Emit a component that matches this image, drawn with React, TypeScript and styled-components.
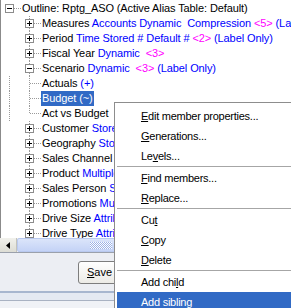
import styled, { createGlobalStyle } from "styled-components";

type Tone = "name" | "blue" | "pink";
type Seg = { text: string; tone?: Tone };
type TreeRow = {
  level: 0 | 1 | 2;
  box?: "plus" | "minus";
  last?: boolean;
  selected?: boolean;
  segs: Seg[];
};

const rows: TreeRow[] = [
  { level: 0, box: "minus", segs: [{ text: "Outline: Rptg_ASO (Active Alias Table: Default)" }] },
  {
    level: 1,
    box: "plus",
    segs: [
      { text: "Measures " },
      { text: "Accounts Dynamic  Compression ", tone: "blue" },
      { text: "<5>", tone: "pink" },
      { text: " (Label Only)", tone: "blue" },
    ],
  },
  {
    level: 1,
    box: "plus",
    segs: [
      { text: "Period " },
      { text: "Time Stored # Default # ", tone: "blue" },
      { text: "<2>", tone: "pink" },
      { text: " (Label Only)", tone: "blue" },
    ],
  },
  {
    level: 1,
    box: "plus",
    segs: [
      { text: "Fiscal Year " },
      { text: "Dynamic  ", tone: "blue" },
      { text: "<3>", tone: "pink" },
    ],
  },
  {
    level: 1,
    box: "minus",
    segs: [
      { text: "Scenario " },
      { text: "Dynamic  ", tone: "blue" },
      { text: "<3>", tone: "pink" },
      { text: " (Label Only)", tone: "blue" },
    ],
  },
  { level: 2, segs: [{ text: "Actuals " }, { text: "(+)", tone: "blue" }] },
  { level: 2, selected: true, segs: [{ text: "Budget (~)" }] },
  { level: 2, last: true, segs: [{ text: "Act vs Budget" }] },
  { level: 1, box: "plus", segs: [{ text: "Customer " }, { text: "Stored", tone: "blue" }] },
  { level: 1, box: "plus", segs: [{ text: "Geography " }, { text: "Stored", tone: "blue" }] },
  { level: 1, box: "plus", segs: [{ text: "Sales Channel " }, { text: "Stored", tone: "blue" }] },
  { level: 1, box: "plus", segs: [{ text: "Product " }, { text: "Multiple Hierarchies", tone: "blue" }] },
  { level: 1, box: "plus", segs: [{ text: "Sales Person " }, { text: "Stored", tone: "blue" }] },
  { level: 1, box: "plus", segs: [{ text: "Promotions " }, { text: "Multiple Hierarchies", tone: "blue" }] },
  { level: 1, box: "plus", segs: [{ text: "Drive Size " }, { text: "Attribute", tone: "blue" }] },
  { level: 1, box: "plus", segs: [{ text: "Drive Type " }, { text: "Attribute", tone: "blue" }] },
];

type MenuEntry = { label: string; key?: number; active?: boolean } | "sep";

const menu: MenuEntry[] = [
  { label: "Edit member properties...", key: 0 },
  { label: "Generations...", key: 0 },
  { label: "Levels...", key: 2 },
  "sep",
  { label: "Find members...", key: 0 },
  { label: "Replace...", key: 0 },
  "sep",
  { label: "Cut", key: 2 },
  { label: "Copy", key: 0 },
  { label: "Delete", key: 0 },
  "sep",
  { label: "Add child", key: 7 },
  { label: "Add sibling", active: true },
];

const GlobalStyle = createGlobalStyle`
  html, body {
    margin: 0;
    padding: 0;
  }
  body {
    width: 291px;
    height: 308px;
    overflow: hidden;
    background: #ffffff;
    font-family: "Liberation Sans", Arial, sans-serif;
    font-size: 11px;
  }
`;

function Expander({ kind }: { kind: "plus" | "minus" }) {
  return (
    <svg width="9" height="9" viewBox="0 0 9 9">
      <rect x="0.5" y="0.5" width="8" height="8" fill="#ffffff" stroke="#8c8c8c" />
      <path d="M2 4.5h5" stroke="#000000" />
      {kind === "plus" && <path d="M4.5 2v5" stroke="#000000" />}
    </svg>
  );
}

function Accel({ label, index }: { label: string; index?: number }) {
  if (index === undefined) return <>{label}</>;
  return (
    <>
      {label.slice(0, index)}
      <u>{label[index]}</u>
      {label.slice(index + 1)}
    </>
  );
}

export default function App() {
  return (
    <Screen>
      <GlobalStyle />
      <TreePane>
        {rows.map((r, i) => (
          <Row key={i}>
            {r.level === 2 && <Guide />}
            <NodeCell $level={r.level} $last={r.last}>
              {r.box && <Expander kind={r.box} />}
            </NodeCell>
            <Label $selected={r.selected}>
              {r.segs.map((s, j) => (
                <Seg key={j} $tone={r.selected ? "sel" : s.tone ?? "name"}>
                  {s.text}
                </Seg>
              ))}
            </Label>
          </Row>
        ))}
      </TreePane>

      <HScroll>
        <ArrowButton>
          <svg width="4" height="7" viewBox="0 0 4 7">
            <path d="M4 0v7L0 3.5z" fill="#000000" />
          </svg>
        </ArrowButton>
        <Thumb>
          <Grip />
        </Thumb>
        <Track />
      </HScroll>

      <ButtonBar>
        <PushButton type="button">
          <u>S</u>ave
        </PushButton>
      </ButtonBar>

      <StatusBand>
        <BandTop />
        <BandBottom />
      </StatusBand>

      <ContextMenu role="menu">
        {menu.map((m, i) =>
          m === "sep" ? (
            <Separator key={i} />
          ) : (
            <MenuItem key={i} role="menuitem" $active={m.active}>
              <Accel label={m.label} index={m.key} />
            </MenuItem>
          )
        )}
      </ContextMenu>
    </Screen>
  );
}

const dotV = "repeating-linear-gradient(to bottom, #9a9a9a 0 1px, transparent 1px 2px)";
const dotH = "repeating-linear-gradient(to right, #9a9a9a 0 1px, transparent 1px 2px)";

const Screen = styled.div`
  position: relative;
  width: 291px;
  height: 308px;
  display: flex;
  flex-direction: column;
  background: #eceef3;
`;

const TreePane = styled.div`
  height: 238px;
  flex: 0 0 238px;
  box-sizing: border-box;
  padding-top: 1px;
  border-left: 1px solid #8b8b8b;
  background: #ffffff;
  overflow: hidden;
`;

const Row = styled.div`
  display: flex;
  align-items: stretch;
  height: 15px;
  white-space: pre;
  letter-spacing: -0.1px;
`;

const Guide = styled.div`
  flex: 0 0 20px;
  background-image: ${dotV};
  background-repeat: no-repeat;
  background-position: 8px 0;
  background-size: 1px 100%;
`;

const NodeCell = styled.div<{ $level: number; $last?: boolean }>`
  flex: 0 0 ${(p) => (p.$level === 1 ? 40 : 20)}px;
  box-sizing: border-box;
  display: flex;
  align-items: center;
  padding-left: ${(p) => (p.$level === 1 ? 24 : 4)}px;
  background-image: ${(p) => (p.$level === 0 ? dotH : `${dotV}, ${dotH}`)};
  background-repeat: no-repeat;
  background-position: ${(p) =>
    p.$level === 0
      ? "13px 7px"
      : p.$level === 1
      ? "28px 0, 33px 7px"
      : "8px 0, 9px 7px"};
  background-size: ${(p) =>
    p.$level === 0
      ? "7px 1px"
      : p.$level === 1
      ? "1px 100%, 7px 1px"
      : `1px ${p.$last ? 8 : 15}px, 11px 1px`};

  svg {
    display: block;
  }
`;

const Label = styled.div<{ $selected?: boolean }>`
  height: 15px;
  line-height: 15px;
  padding: 0 1px;
  background: ${(p) => (p.$selected ? "#316ac5" : "transparent")};
`;

const Seg = styled.span<{ $tone: Tone | "sel" }>`
  color: ${(p) =>
    p.$tone === "blue"
      ? "#0000ff"
      : p.$tone === "pink"
      ? "#ff00ff"
      : p.$tone === "sel"
      ? "#ffffff"
      : "#000000"};
`;

const HScroll = styled.div`
  flex: 0 0 14px;
  display: flex;
  border-bottom: 1px solid #9aa0ab;
  background: #f4f3ee;
`;

const ArrowButton = styled.div`
  flex: 0 0 17px;
  display: flex;
  align-items: center;
  justify-content: center;
  box-sizing: border-box;
  background: linear-gradient(#f1f1ec, #dcdcd4);
  border-right: 1px solid #c3c3bb;
`;

const Thumb = styled.div`
  flex: 0 0 168px;
  display: flex;
  align-items: center;
  justify-content: center;
  box-sizing: border-box;
  border: 1px solid #b9c9ef;
  border-radius: 2px;
  background: linear-gradient(#dbe5fa, #c4d3f6);
`;

const Grip = styled.div`
  width: 22px;
  height: 7px;
  background: repeating-conic-gradient(#ffffff 0 25%, #9db3e6 0 50%) 0 0 / 2px 2px;
`;

const Track = styled.div`
  flex: 1;
`;

const ButtonBar = styled.div`
  flex: 0 0 38px;
  display: flex;
  align-items: center;
  padding-left: 78px;
  background: #eceef3;
`;

const PushButton = styled.button`
  height: 23px;
  min-width: 75px;
  padding: 0 8px;
  text-align: left;
  border: 1px solid #7d7d7d;
  border-radius: 3px;
  background: linear-gradient(#ffffff, #ecebe6);
  font-family: "Liberation Sans", Arial, sans-serif;
  font-size: 11px;
  color: #000000;
`;

const StatusBand = styled.div`
  flex: 1;
  display: flex;
  flex-direction: column;
`;

const BandTop = styled.div`
  flex: 0 0 7px;
  border-top: 2px solid #a7b6cf;
  border-bottom: 1px solid #a9b2c2;
  background: #e4e9f2;
`;

const BandBottom = styled.div`
  flex: 1;
  background: #f0f2f6;
`;

const ContextMenu = styled.div`
  position: absolute;
  left: 114px;
  top: 102px;
  width: 200px;
  box-sizing: border-box;
  padding: 3px 2px;
  border: 1px solid #8d8d8d;
  background: #ffffff;
`;

const MenuItem = styled.div<{ $active?: boolean }>`
  height: 20px;
  line-height: 20px;
  padding-left: 24px;
  white-space: nowrap;
  letter-spacing: -0.25px;
  color: ${(p) => (p.$active ? "#ffffff" : "#000000")};
  background: ${(p) => (p.$active ? "#316ac5" : "transparent")};
`;

const Separator = styled.div`
  height: 1px;
  margin-bottom: 1px;
  background: #a6a6a6;
`;
